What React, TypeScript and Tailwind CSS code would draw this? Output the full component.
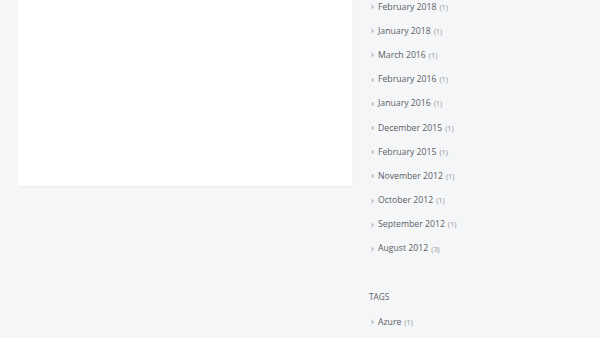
import React from "react";

const items: [string, number][] = [
  ["February 2018", 1],
  ["January 2018", 1],
  ["March 2016", 1],
  ["February 2016", 1],
  ["January 2016", 1],
  ["December 2015", 1],
  ["February 2015", 1],
  ["November 2012", 1],
  ["October 2012", 1],
  ["September 2012", 1],
  ["August 2012", 3],
];

function Row({ label, count }: { label: string; count: number }) {
  return (
    <li className="flex items-center h-[24.2px] pl-[2px]">
      <svg width="4" height="6" viewBox="0 0 4 6" className="mr-[3px]">
        <path d="M0.5 0.5 L3.5 3 L0.5 5.5 Z" fill="#c2c5ca" />
      </svg>
      <span className="text-[8.7px] text-[#5a5e64]">{label}</span>
      <span className="ml-[3px] text-[7.3px] text-[#8e9297]">({count})</span>
    </li>
  );
}

export default function App() {
  return (
    <div
      className="w-[600px] h-[338px] overflow-hidden bg-[#f5f6f8]"
      style={{ fontFamily: '"Open Sans", "Liberation Sans", sans-serif' }}
    >
      <div className="flex pl-[18px] -mt-[5px]">
        <div className="w-[334px] h-[191px] bg-white shadow-[0_1px_1px_rgba(0,0,0,0.04)]" />
        <div className="ml-[17px] w-[200px]">
          <ul>
            {items.map(([l, c]) => (
              <Row key={l} label={l} count={c} />
            ))}
          </ul>
          <div className="mt-[32px] text-[8.2px] text-[#5a5e64] leading-none h-[12px]">TAGS</div>
          <ul className="mt-[5px]">
            <Row label="Azure" count={1} />
          </ul>
        </div>
      </div>
    </div>
  );
}
